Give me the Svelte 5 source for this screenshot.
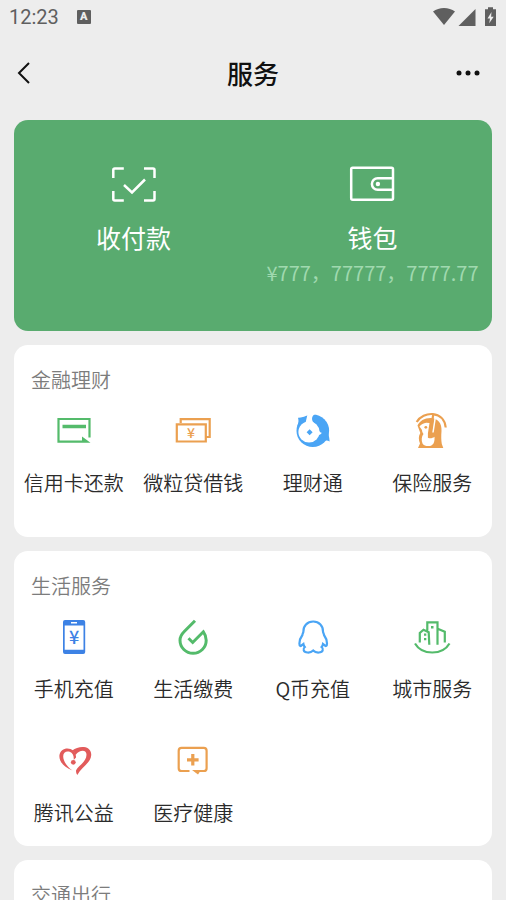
<script lang="ts">
  type Service = { icon: string; label: string };
  type Section = { title: string; services: Service[] };

  const sections: Section[] = [
    {
      title: "金融理财",
      services: [
        { icon: "card", label: "信用卡还款" },
        { icon: "loan", label: "微粒贷借钱" },
        { icon: "wealth", label: "理财通" },
        { icon: "insurance", label: "保险服务" },
      ],
    },
    {
      title: "生活服务",
      services: [
        { icon: "phone", label: "手机充值" },
        { icon: "utilities", label: "生活缴费" },
        { icon: "qcoin", label: "Q币充值" },
        { icon: "city", label: "城市服务" },
        { icon: "charity", label: "腾讯公益" },
        { icon: "health", label: "医疗健康" },
      ],
    },
    { title: "交通出行", services: [] },
  ];
</script>

{#snippet serviceIcon(name: string)}
  <svg class="service-icon {name}" viewBox="0 0 44 44" aria-hidden="true">
    {#if name === "card"}
      <path class="line" d="M30 32.7H6.500V10H37.500V28.500" />
      <path class="fill" d="M10.500 15.800h23.500v3.500h-23.500zM30 27.500l8.500 6.200H30z" />
    {:else if name === "loan"}
      <path class="line" d="M9.700 14V10.200H38.700V28H35.500M5.800 15.300H34.800V32.500H5.800z" />
      <text class="yen small" x="20" y="28.500">¥</text>
    {:else if name === "wealth"}
      <path class="fill" d="M7 8.700c3 .2 6-1 9.300-2L15 13 6.500 17c.8-2.500 1.500-5.500.5-8.300z" />
      <circle class="fill" cx="21.800" cy="21.700" r="16.300" />
      <path class="fill" d="M37 24c1 2.800 1.400 5.500 1.600 8.500-2-1.200-3.500-1-5.600-.5z" />
      <path class="cut-fill" d="M16.800 4L14.500 14h8.500C20.500 11.500 20 7.500 24 5V3z" />
      <circle class="cut-fill" cx="18" cy="23" r="10.600" />
      <path class="cut-fill" d="M27 20.500c1.500 2.500 2.500 3 3.700 3.300-.6 1.500-1.500 2-3 2.200z" />
      <path class="fill" d="M18.600 20.200l3 3-3 3-3-3z" />
    {:else if name === "insurance"}
      <path class="line" d="M6.700 13C13 2 34 1 35.700 18.500" />
      <path
        class="fill"
        d="M7.500 16.500C9.500 12 14.500 9 20.500 9c7.500 0 11.500 5.500 11 13-.4 5-.3 9 .3 13l1.500 4H8l2-4.500C8.500 31 8.300 27 10.300 24z"
      />
      <path
        class="cut-fill"
        d="M9.500 17.500c1.800-2.300 4-3.500 6.700-3.800l3.300.3-1.600 10.500v4.200c2 1 4.500.7 6.600-.9.300 4-.5 7.800-3.500 8.900-3 .9-7 .3-8.500-2.200-1.300-3-1-7 1-9.500-1-1.200-1.500-2.500-1.500-4z"
      />
      <path class="cut thin" d="M25.500 7L23 23.500" />
      <path class="line" d="M23.300 5L20 26.500" />
      <circle class="fill" cx="15.800" cy="18.300" r="1.400" />
    {:else if name === "phone"}
      <path
        class="fill"
        fill-rule="evenodd"
        d="M13 5h18.200a2 2 0 0 1 2 2v30a2 2 0 0 1-2 2H13a2 2 0 0 1-2-2V7a2 2 0 0 1 2-2zM12.700 10.400v24.300h18.800V10.400zM19 7v1.600h6V7z"
      />
      <text class="yen" x="22.200" y="29">¥</text>
    {:else if name === "utilities"}
      <path
        class="line"
        d="M24 5.700L13.500 16.300C10.500 19.300 9 22 9 25.200A13.100 13.100 0 0 0 35.200 25.200c0-3.200-.9-5.800-2.800-8.400L21.700 27.500 17.500 23.300"
      />
    {:else if name === "qcoin"}
      <path
        class="line"
        d="M22.200 6.500c-6 0-10 4.500-9.800 10 0 1.500-1 2-1 3.500-1.800 2.500-3 5.300-3 8.500 0 2.600 1.200 3.300 2.600 1.500l1.400-1c.3 1.500.8 2.300 1.400 3-2.200 1.800-1.600 5.200 2.700 5.500 2.500.2 4.200-.5 5.700-2 1.500 1.500 3.200 2.200 5.700 2 4.300-.3 4.900-3.700 2.700-5.500.6-.7 1.100-1.500 1.400-3l1.400 1c1.400 1.800 2.600 1.100 2.600-1.500 0-3.200-1.200-6-3-8.500 0-1.500-1-2-1-3.500.2-5.500-3.800-10-9.800-10z"
      />
    {:else if name === "city"}
      <path
        class="line"
        d="M5 28.500C12 40.500 32.500 40.500 39.500 28.500M9.800 27.500V18l3.700-3.300 5.200 2.500 .6 12.500M17.300 15.500V7.300h10.200v22.500M27.700 13.800l7.100 3V27.500"
      />
      <path class="fill" d="M21 11h2.500v2.500H21zM14 18.500h2.300v2.300H14zM14 23h2.300v2.300H14z" />
    {:else if name === "charity"}
      <path
        class="fill"
        d="M20.500 31.500C12 28.500 7 22.500 7.400 16.500 8 10.500 14 8.300 18.500 10c3.800 1.500 5.800 5 5.500 8.500l-2.300 2.500c.4-4-1-7.200-4-8.200-3.500-1.200-6.500.8-6.500 4.500 0 5 3.800 10.500 9.300 14.200z"
      />
      <path
        class="fill"
        d="M20.300 11.500C23.500 9 28 7.500 32 8c4.700.6 7.600 3.700 7.200 8.300C38.700 24 29.500 28 25.300 36c-1-1.500-1.500-3-1.200-4.800C26 27 34.500 23 34.500 15.800c0-5.300-6.500-5.500-11 .2-.7-1.800-1.700-3.200-3.200-4.500z"
      />
      <circle class="fill" cx="21.300" cy="23.300" r="2.400" />
    {:else if name === "health"}
      <path
        class="line"
        d="M18.500 32H10.500a2.800 2.800 0 0 1-2.800-2.800V11.700A2.800 2.800 0 0 1 10.500 8.900h22.300a2.800 2.800 0 0 1 2.800 2.800v17.500a2.800 2.800 0 0 1-2.800 2.800H28"
      />
      <path class="fill" d="M20.200 15h3.200v4.200h4.200v3.200h-4.200v4.200h-3.200v-4.200H16v-3.200h4.200zM21 31h9l-3 4.500z" />
    {/if}
  </svg>
{/snippet}

<div class="page">
  <div class="status-bar">
    <span class="time">12:23</span>
    <span class="input-badge">A</span>
    <svg class="status-icons" viewBox="0 0 64 20" aria-hidden="true">
      <path d="M0 4.500C6-.3 16-.3 22 4.500L11 18z" />
      <path d="M42.500 2v17H25.500z" />
      <path d="M55 .3h5v2h3V19H52V2.300h3z" />
      <path class="bolt" d="M58.500 5l-4 6.500h2.500l-.8 4.700 4.500-6.500h-2.600z" />
    </svg>
  </div>

  <header class="nav">
    <button type="button" class="nav-button" aria-label="返回">
      <svg viewBox="0 0 24 24" aria-hidden="true">
        <path class="chevron" d="M17 2L7 12l10 10" />
      </svg>
    </button>
    <h1>服务</h1>
    <button type="button" class="nav-button" aria-label="更多">
      <svg viewBox="0 0 24 24" aria-hidden="true">
        <circle cx="3" cy="12" r="2.500" />
        <circle cx="12" cy="12" r="2.500" />
        <circle cx="21" cy="12" r="2.500" />
      </svg>
    </button>
  </header>

  <main>
    <section class="pay-card">
      <button type="button" class="pay-item">
        <svg viewBox="0 0 48 40" aria-hidden="true">
          <path d="M3.300 13V5a1.500 1.500 0 0 1 1.500-1.500h9M34 3.500h9A1.500 1.500 0 0 1 44.500 5v8M44.500 26v8a1.500 1.500 0 0 1-1.500 1.500h-9M13.800 35.500h-9A1.500 1.500 0 0 1 3.300 34v-8M14 20l8 7.500 13-13" />
        </svg>
        <span>收付款</span>
      </button>
      <button type="button" class="pay-item">
        <svg viewBox="0 0 48 40" aria-hidden="true">
          <rect x="2.200" y="2.800" width="41.800" height="32" rx="1.500" />
          <path d="M43.500 13.200H28.700a5.800 5.800 0 0 0 0 11.600H43.500" />
          <circle class="clasp" cx="28.900" cy="19" r="2.200" />
        </svg>
        <span>钱包</span>
        <span class="balance">¥777，77777，7777.77</span>
      </button>
    </section>

    {#each sections as section}
      <section class="service-card">
        <h2>{section.title}</h2>
        <div class="service-grid">
          {#each section.services as service}
            <button type="button" class="service">
              {@render serviceIcon(service.icon)}
              <span>{service.label}</span>
            </button>
          {/each}
        </div>
      </section>
    {/each}
  </main>
</div>

<style>
  :global(body) {
    margin: 0;
    background: #ededed;
  }

  .page {
    display: flex;
    flex-direction: column;
    height: 100vh;
    overflow: hidden;
    color: #2b2b2b;
    font-family: "Noto Sans CJK SC", sans-serif;
  }

  button {
    margin: 0;
    padding: 0;
    border: 0;
    background: none;
    color: inherit;
    font: inherit;
    cursor: pointer;
  }

  .status-bar {
    display: flex;
    flex: none;
    align-items: center;
    height: 34px;
    padding: 0 9px;
    color: #5f5f5f;
    font-family: Roboto, sans-serif;
    font-size: 20px;
  }

  .input-badge {
    width: 14px;
    margin-left: 18px;
    border-radius: 1px;
    background: #5f5f5f;
    color: #ededed;
    font-size: 11px;
    font-weight: 900;
    line-height: 14px;
    text-align: center;
  }

  .status-icons {
    width: 64px;
    height: 20px;
    margin-left: auto;
    fill: #5f5f5f;
  }

  .status-icons .bolt {
    fill: #ededed;
  }

  .nav {
    display: flex;
    flex: none;
    align-items: center;
    justify-content: space-between;
    height: 78px;
    padding: 0 26px 0 12px;
    color: #111;
  }

  .nav h1 {
    flex: 1;
    margin: 0 0 0 14px;
    font-size: 26px;
    font-weight: 500;
    line-height: 36px;
    text-align: center;
  }

  .nav-button svg {
    display: block;
    width: 24px;
    height: 24px;
    fill: currentColor;
  }

  .nav-button .chevron {
    fill: none;
    stroke: currentColor;
    stroke-width: 2;
  }

  main {
    display: flex;
    flex: 1;
    flex-direction: column;
    gap: 14px;
    min-height: 0;
    padding: 8px 14px 0;
    overflow-y: auto;
    scrollbar-width: none;
  }

  .pay-card {
    display: grid;
    flex: none;
    grid-template-columns: 1fr 1fr;
    box-sizing: border-box;
    min-height: 211px;
    padding-top: 45px;
    border-radius: 14px;
    background: #59ab6f;
    color: #fff;
  }

  .pay-item {
    display: flex;
    flex-direction: column;
    align-items: center;
    font-size: 25px;
    line-height: 36px;
  }

  .pay-item svg {
    width: 48px;
    height: 40px;
    margin-bottom: 14px;
    fill: none;
    stroke: currentColor;
    stroke-width: 2.5;
  }

  .pay-item .clasp {
    fill: currentColor;
    stroke: none;
  }

  .balance {
    color: #a0d9af;
    font-size: 20px;
    white-space: nowrap;
  }

  .service-card {
    box-sizing: border-box;
    flex: none;
    min-height: 192px;
    padding: 20px 0 9px;
    border-radius: 14px;
    background: #fff;
  }

  .service-card h2 {
    margin: 0 0 14px;
    padding-left: 17px;
    color: #7c7c7c;
    font-size: 20px;
    font-weight: 350;
    line-height: 30px;
  }

  .service-grid {
    display: grid;
    grid-template-columns: repeat(4, 1fr);
    row-gap: 26px;
  }

  .service {
    display: flex;
    flex-direction: column;
    gap: 15px;
    align-items: center;
    height: 98px;
    font-size: 20px;
    font-weight: 350;
    line-height: 30px;
    white-space: nowrap;
  }

  .service-icon {
    width: 44px;
    height: 44px;
    flex: none;
  }

  .service-icon .line {
    fill: none;
    stroke: currentColor;
    stroke-width: 2.2;
  }

  .service-icon .fill {
    fill: currentColor;
  }

  .service-icon .cut {
    fill: none;
    stroke: #fff;
    stroke-width: 1.5;
  }

  .service-icon .cut-fill {
    fill: #fff;
  }

  .yen {
    fill: currentColor;
    font-family: "Noto Sans CJK SC", sans-serif;
    font-size: 18px;
    font-weight: 500;
    text-anchor: middle;
  }

  .yen.small {
    font-size: 14px;
  }

  .card,
  .utilities,
  .city {
    color: #54bb6b;
  }

  .utilities .line {
    stroke-width: 3;
  }

  .loan,
  .insurance,
  .health {
    color: #eba050;
  }

  .wealth,
  .qcoin {
    color: #4aa5f5;
  }

  .phone {
    color: #3d82e5;
  }

  .charity {
    color: #e25b5b;
  }
</style>
